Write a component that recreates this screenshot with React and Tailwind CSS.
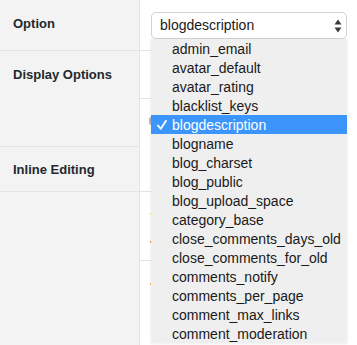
import React from 'react';

const OPTIONS = [
  'admin_email',
  'avatar_default',
  'avatar_rating',
  'blacklist_keys',
  'blogdescription',
  'blogname',
  'blog_charset',
  'blog_public',
  'blog_upload_space',
  'category_base',
  'close_comments_days_old',
  'close_comments_for_old',
  'comments_notify',
  'comments_per_page',
  'comment_max_links',
  'comment_moderation',
];

const SELECTED = 'blogdescription';

function Label({ children }) {
  return (
    <span className="text-[13px] font-bold text-[#23282d] leading-[17px]">{children}</span>
  );
}

export default function App() {
  return (
    <div className="relative w-[357px] h-[345px] bg-white overflow-hidden font-['Liberation_Sans',Arial,sans-serif]">
      <div className="flex h-full">
        {/* Left label column */}
        <div className="w-[140px] shrink-0 bg-[#f3f3f3] border-r border-[#e4e4e4] flex flex-col">
          <div className="h-[51px] border-b border-[#e4e4e4] pl-[13px] pt-[11px]">
            <Label>Option</Label>
          </div>
          <div className="h-[96px] border-b border-[#e4e4e4] pl-[13px] pt-[11px]">
            <Label>Display Options</Label>
          </div>
          <div className="h-[45px] border-b border-[#e4e4e4] pl-[13px] pt-[10px]">
            <Label>Inline Editing</Label>
          </div>
          <div className="flex-1" />
        </div>

        {/* Right value column, mostly under the open select */}
        <div className="w-[200px] flex flex-col">
          <div className="h-[51px] border-b border-[#e4e4e4]" />
          <div className="h-[48px] border-b border-[#e4e4e4]" />
          <div className="h-[93px] border-b border-[#e4e4e4] pl-[9px] pt-[18px]">
            <div className="w-[12px] h-[8px] rounded-[2px] border-l-2 border-[#b4b9be]" />
          </div>
          <div className="h-[69px] border-b border-[#e4e4e4] pl-[10px] pt-[21px] flex flex-col gap-[26px]">
            <div className="w-[6px] h-[2px] bg-[#fbe3a8]" />
            <div className="w-[6px] h-[2px] bg-[#f0a030]" />
          </div>
          <div className="pl-[10px] pt-[22px]">
            <div className="w-[6px] h-[2px] bg-[#f5b55a]" />
          </div>
        </div>
      </div>

      {/* Open select */}
      <div className="absolute left-[151px] top-[12px] w-[196px]">
        <div className="h-[27px] bg-white border border-[#d2d2d2] rounded-[5px] flex items-center justify-between pl-[8px] pr-[4px] shadow-[0_1px_1px_rgba(0,0,0,0.04)]">
          <span className="text-[14px] text-[#1a1a1a]">{SELECTED}</span>
          <svg width="8" height="14" viewBox="0 0 8 14">
            <path d="M4 0.5 L7.5 5.5 L0.5 5.5 Z" fill="#3a3a3a" />
            <path d="M4 13.5 L7.5 8.5 L0.5 8.5 Z" fill="#3a3a3a" />
          </svg>
        </div>
        <div className="bg-[#efefef] shadow-[0_1px_3px_rgba(0,0,0,0.08)]">
          {OPTIONS.map((o) => {
            const active = o === SELECTED;
            return (
              <div
                key={o}
                className={`relative h-[19px] pl-[21px] flex items-center text-[14px] leading-none ${
                  active ? 'bg-[#3b95fb] text-white' : 'text-[#1a1a1a]'
                }`}
              >
                {active && (
                  <svg className="absolute left-[6px] top-[5px]" width="10" height="10" viewBox="0 0 10 10">
                    <path d="M1 5.5 L3.8 8.8 L9 0.8" fill="none" stroke="white" strokeWidth="1.8" strokeLinecap="round" strokeLinejoin="round" />
                  </svg>
                )}
                {o}
              </div>
            );
          })}
        </div>
      </div>
    </div>
  );
}
